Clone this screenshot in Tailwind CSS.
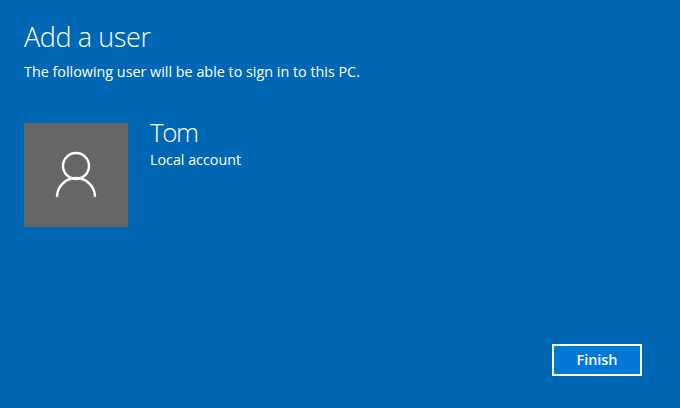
<!DOCTYPE html>
<html lang="en">
<head>
  <meta charset="UTF-8" />
  <title>Add a user</title>
  <script src="https://cdn.jsdelivr.net/npm/@tailwindcss/browser@4"></script>
</head>
<body class="bg-[#0067b4] text-white font-['Open_Sans',sans-serif] overflow-hidden">
  <div class="w-[680px] h-[408px] flex flex-col pl-6 pr-[38px] pt-[19px] pb-8">
    <h1 class="text-[27px] leading-9 font-light tracking-[-0.4px]">Add a user</h1>
    <p class="mt-[7px] text-[14.35px] leading-5">The following user will be able to sign in to this PC.</p>
    <div class="mt-[41px] flex gap-[22px]">
      <div class="w-[104px] h-[104px] bg-[#666666] shrink-0">
        <svg width="104" height="104" viewBox="0 0 104 104" fill="none" stroke="white" stroke-width="2.4">
          <circle cx="52" cy="43" r="13" />
          <path d="M33 74a19 19 0 0 1 38 0" />
        </svg>
      </div>
      <div>
        <div class="text-[26px] leading-[18px] font-light h-[27px] tracking-[-1.4px]">Tom</div>
        <div class="text-[14.3px] leading-5">Local account</div>
      </div>
    </div>
    <div class="mt-auto flex justify-end">
      <button class="w-[90px] h-8 bg-[#0078d7] border-2 border-white text-[14.4px] font-semibold">Finish</button>
    </div>
  </div>
</body>
</html>
